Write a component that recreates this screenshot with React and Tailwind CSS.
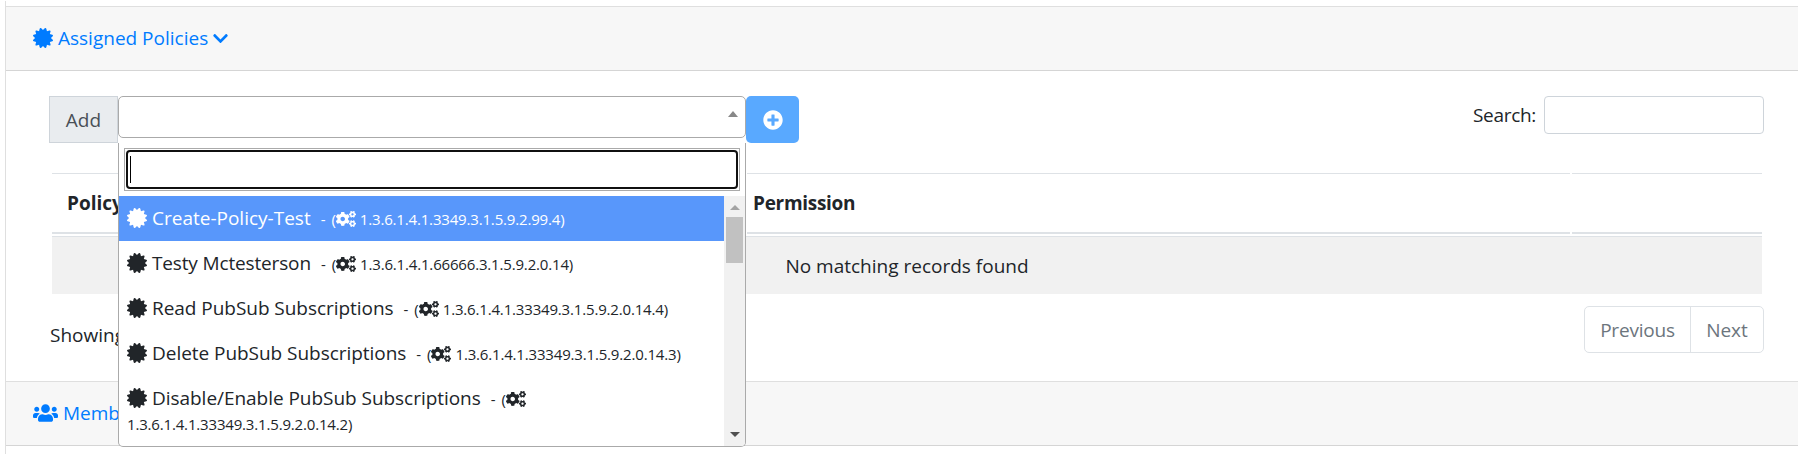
import { FaChevronDown, FaCertificate, FaCogs, FaUsers, FaPlusCircle } from "react-icons/fa";

const policies = [
  { name: "Create-Policy-Test", oid: "1.3.6.1.4.1.3349.3.1.5.9.2.99.4", active: true, tracking: "" },
  { name: "Testy Mctesterson", oid: "1.3.6.1.4.1.66666.3.1.5.9.2.0.14", tracking: "tracking-[-0.15px]" },
  { name: "Read PubSub Subscriptions", oid: "1.3.6.1.4.1.33349.3.1.5.9.2.0.14.4", tracking: "tracking-[-0.04px]" },
  { name: "Delete PubSub Subscriptions", oid: "1.3.6.1.4.1.33349.3.1.5.9.2.0.14.3", tracking: "tracking-[-0.04px]" },
  { name: "Disable/Enable PubSub Subscriptions", oid: "1.3.6.1.4.1.33349.3.1.5.9.2.0.14.2", wrap: true, tracking: "tracking-[-0.04px]" },
];

function Option({ name, oid, active, wrap, tracking }) {
  return (
    <li className={`px-2 ${wrap ? "h-[73px]" : "h-[45px]"} ${active ? "bg-[#5897fb] text-white" : "text-[#212529]"}`}>
      <div className="flex h-[45px] items-center whitespace-pre pb-px">
        <FaCertificate className="size-5 shrink-0" />
        <span className={`ml-[5px] ${tracking}`}>{name}</span>
        <span className="ml-[10px] flex items-center pt-0.5 text-[15px]">
          <span className="[word-spacing:2px]">- (</span>
          <FaCogs className="h-4 w-5" />
          {!wrap && <span className="ml-1 tracking-[-0.17px]">{oid})</span>}
        </span>
      </div>
      {wrap && <div className="-mt-[9px] text-[15px] leading-[24px] tracking-[-0.17px]">{oid})</div>}
    </li>
  );
}

function Dropdown() {
  return (
    <div className="absolute left-0 top-[47px] z-10 h-[304px] w-[628px] overflow-hidden rounded-b-[5px] border border-t-0 border-[#aaa] bg-white">
      <div className="h-[53px] p-[5px]">
        <div className="h-[43px] border border-[#aaa] p-px">
          <div className="flex h-full items-center rounded-[4px] border-2 border-[#101010] pl-[2px]">
            <span className="h-[27px] w-px bg-black" />
          </div>
        </div>
      </div>
      <div className="flex h-[250px]">
        <ul className="flex-1 overflow-hidden">
          {policies.map((p) => (
            <Option key={p.oid} {...p} />
          ))}
        </ul>
        <div className="flex w-[21px] flex-col items-center bg-[#f1f1f1]">
          <svg className="mt-2 h-[6px] w-[10px]" viewBox="0 0 10 6"><path d="M0 6 5 1l5 5z" fill="#a3a3a3" /></svg>
          <div className="mt-[7px] h-[46px] w-[17px] bg-[#c1c1c1]" />
          <svg className="mb-2 mt-auto h-[6px] w-[10px]" viewBox="0 0 10 6"><path d="M0 0l5 5 5-5z" fill="#505050" /></svg>
        </div>
      </div>
    </div>
  );
}

export default function App() {
  return (
    <div className="h-[454px] overflow-hidden bg-white pl-[5px] pr-[2px] pt-px font-['Open_Sans',sans-serif] text-[19px] leading-[30px] text-[#212529]">
      <div className="h-[453px] border-l border-[#dfdfdf] pt-[5px]">
        <div className="flex h-[65px] items-center border-b border-t border-b-[#d5d5d5] border-t-[#dfdfdf] bg-[#f7f7f7] pb-px pl-[26.5px] text-[#007bff]">
          <FaCertificate className="size-5" />
          <span className="ml-[5.5px]">Assigned Policies</span>
          <FaChevronDown className="ml-1 size-[17px]" />
        </div>

        <div className="h-[310px] pl-[43px] pr-[34px] pt-[25px]">
          <div className="flex h-[77px] items-start">
            <div className="flex h-[47px] w-[69px] items-center justify-center border border-[#ced4da] bg-[#e9ecef] text-[#495057]">Add</div>
            <div className="relative w-[628px]">
              <div className="flex h-[42px] w-[628px] items-center justify-end rounded-[5px] border border-[#aaa] pr-[7px]">
                <svg className="mb-1.5 h-[6px] w-[10px]" viewBox="0 0 10 6"><path d="M0 6 5 0l5 6z" fill="#888" /></svg>
              </div>
              <Dropdown />
            </div>
            <button className="z-20 flex h-[47px] w-[53px] items-center justify-center rounded-[5px] bg-[#59a9ff] text-white">
              <FaPlusCircle className="size-5" />
            </button>
            <label className="ml-auto flex h-[38px] items-center tracking-[-0.3px]">
              <span className="pb-px">Search:</span>
              <span className="ml-2 h-[38px] w-[220px] rounded-[4px] border border-[#ced4da]" />
            </label>
          </div>

          <div className="ml-[3px] mr-[2px] flex gap-[2px] font-bold">
            <div className="flex h-[61px] w-[693px] items-center border-b-2 border-t border-[#dee2e6] pl-[15px]">Policy</div>
            <div className="flex h-[61px] w-[823px] items-center border-b-2 border-t border-[#dee2e6] pl-[6px] tracking-[-0.3px]">Permission</div>
            <div className="h-[61px] flex-1 border-b-2 border-t border-[#dee2e6]" />
          </div>
          <div className="ml-[3px] mr-[2px] mt-[2px] flex h-[58px] items-center justify-center border-t border-[#dee2e6] bg-[#f1f1f1]">
            No matching records found
          </div>
          <div className="flex items-start justify-between pt-3">
            <span className="pl-px pt-[14px]">Showing</span>
            <div className="flex h-[47px] items-center rounded-[5px] border border-[#dee2e6] text-[#6c757d]">
              <span className="flex h-full w-[106px] items-center justify-center border-r border-[#dee2e6] tracking-[-0.2px]">Previous</span>
              <span className="flex h-full w-[72px] items-center justify-center">Next</span>
            </div>
          </div>
        </div>

        <div className="flex h-[65px] items-center border-b border-t border-b-[#d5d5d5] border-t-[#dfdfdf] bg-[#f7f7f7] pb-px pl-[26.5px] text-[#007bff]">
          <FaUsers className="h-5 w-[25px]" />
          <span className="ml-[5.5px]">Members</span>
        </div>
      </div>
    </div>
  );
}
